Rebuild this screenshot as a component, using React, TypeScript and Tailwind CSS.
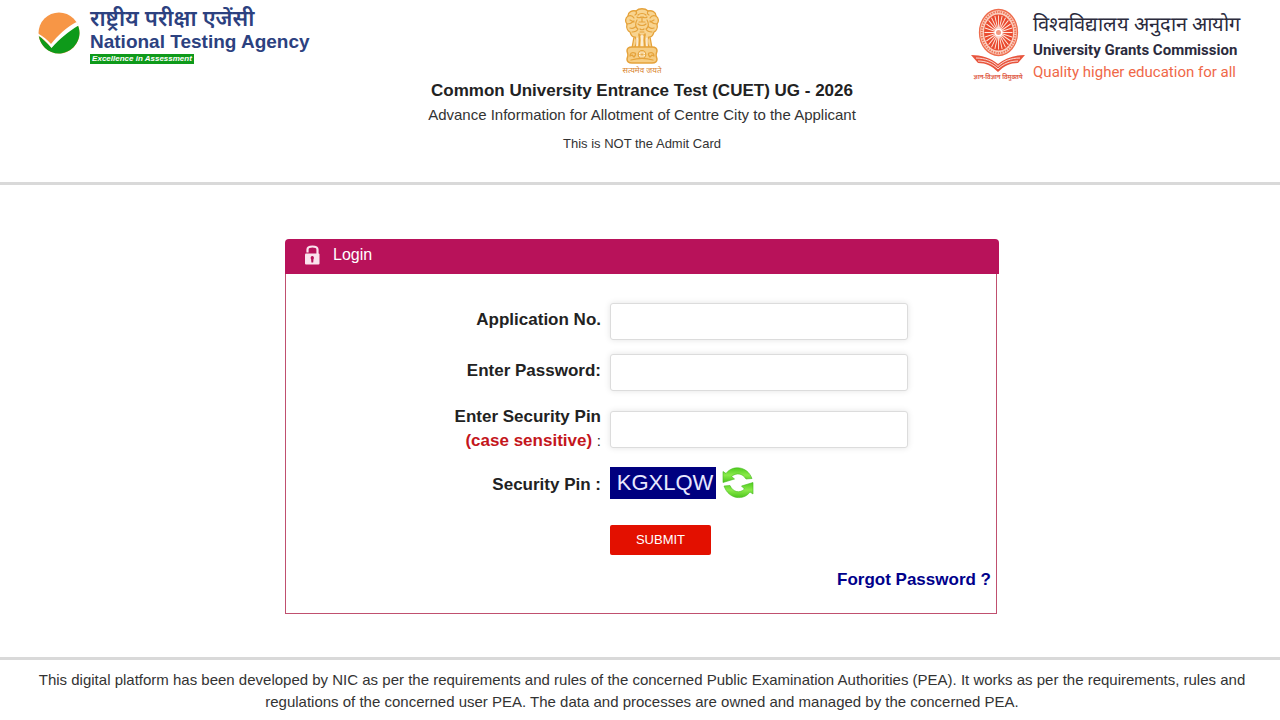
import { useState } from "react";

const SPOKES = Array.from({ length: 24 }, (_, i) => i * 15);

function NtaMark() {
    return (
        <svg viewBox="0 0 42 42" className="w-[42px] h-[42px]" aria-hidden="true">
            <circle cx="21" cy="21" r="20.5" fill="#f79646" />
            <path d="M.8 23.5C2 33.500 10.500 41.500 21 41.500S41.500 32 41.500 21c0-3-.8-6-2-8.500C30 19 22 26 13.500 35.500Z" fill="#0e9a1a" />
            <path d="M0 21.500c5 2.500 9.500 6.500 13 10.500C20 23 29 15 38.500 10l2 3.500C30.500 19.500 22 26.500 13.500 36 9 30.500 5 26 0 23.500Z" fill="#fff" />
        </svg>
    )
}

function Emblem() {
    return (
        <svg viewBox="0 0 36 56" className="w-9 h-14" fill="none" stroke="#e5a23a" strokeLinecap="round" strokeLinejoin="round" aria-hidden="true">
            <path d="M12 3c3-3 9-3 12 0 4-1 8 1 8 5 3 2 3 6 1 8 1 4-1 7-3 8-1 3-3 5-4 5l2 11H8l2-11c-1 0-3-2-4-5-2-1-4-4-3-8-2-2-2-6 1-8 0-4 4-6 8-5Z" fill="#f8d490" strokeWidth="1.300" />
            <path d="M12 3c1 2 1 3-1 4m13-4c-1 2-1 3 1 4M4 8c3-1 5 0 6 2m22-2c-3-1-5 0-6 2M14 7c2-2 6-2 8 0M13 9c1 1 3 1 4 0m2 0c1 1 3 1 4 0M18 9v5m-3 0h6m-7 2c2 2 6 2 8 0m-9-4c-2 3-2 7 1 9m9-9c2 3 2 7-1 9M3 16c3 0 5-1 7-3m23 3c-3 0-5-1-7-3M6 12l4 2m20-2-4 2M6 20c2 1 5 0 6-2m18 2c-2 1-5 0-6-2M8 24c3 0 5-1 6-3m14 3c-3 0-5-1-6-3m-6 0c1 1 3 1 4 0m-4 3h4m-5 3h6" strokeWidth="1.200" />
            <path d="M11 29c2 2 2 6 0 10m4-13c1 4 1 8 0 13m6-13c-1 4-1 8 0 13m4-10c-2 2-2 6 0 10" strokeWidth="1.500" />
            <path d="M13 30v8m5-11v12m5-9v8" stroke="#fff" strokeWidth="1.200" />
            <path d="M3 43c0-3 2-4 5-4h20c3 0 5 1 5 4-1 2-1 6 0 8 0 3-2 4-5 4H8c-3 0-5-1-5-4 1-2 1-6 0-8Z" fill="#f6cd83" strokeWidth="1.500" />
            <circle cx="18" cy="46.500" r="3.800" fill="#fff2d5" strokeWidth="1.200" />
            <path d="M18 43v7m-3.500-3.500h7M15.500 44l5 5m0-5-5 5" strokeWidth=".6" />
            <path d="M6 48c0-3 2-4 5-3 1 1 0 3-1 4m-4-1 2-1 2 2m20-1c0-3-2-4-5-3-1 1 0 3 1 4m4-1-2-1-2 2M7 52c7-2 15-2 22 0" strokeWidth="1.300" />
        </svg>
    )
}

function UgcMark() {
    return (
        <svg viewBox="0 0 54 64" className="w-[54px] h-16" fill="none" aria-hidden="true">
            <ellipse cx="27.500" cy="24.500" rx="19" ry="23" fill="#fbd0c0" stroke="#ee6c4d" strokeWidth="1.300" />
            <ellipse cx="27.500" cy="24.500" rx="16.800" ry="20.600" stroke="#ee7558" strokeWidth="2" strokeDasharray="1.500 1" />
            <ellipse cx="27.500" cy="24.500" rx="14.500" ry="18" fill="#e9492d" />
            <g stroke="#ffe9df" strokeWidth=".9" transform="translate(27.500 24.500) scale(1 1.220)">
                {SPOKES.map((angle) => (
                    <path key={angle} d="M0 3v11" transform={`rotate(${angle})`} />
                ))}
            </g>
            <circle cx="27.500" cy="24.500" r="4" fill="#fff" />
            <circle cx="27.500" cy="24.500" r="2.500" fill="#f29a82" />
            <path d="M0 47c10 0 20 3 27 9 7-6 17-9 27-9l-7 8c-8 0-14 3-20 9-6-6-12-9-20-9Z" fill="#e8543c" />
            <path d="M5 50c9 0 17 3 22 8.500C32 53 40 50 49 50M7 53c8 0 15 3 20 8 5-5 12-8 20-8" stroke="#fff" strokeWidth=".8" />
        </svg>
    )
}

function LockIcon() {
    return (
        <svg viewBox="0 0 16 20" className="w-4 h-5" aria-hidden="true">
            <path d="M2.500 7.500V4.500C2.500 2.500 4 1.500 7.500 1.500s5 1 5 3V10" fill="none" stroke="#fbe3ee" strokeWidth="2.200" />
            <rect x="0" y="8.500" width="14.500" height="11" rx="1" fill="#fbe3ee" />
            <path d="M7.300 11a1.800 1.800 0 0 1 1.200 3l-.3 3.500H6.400L6.100 14a1.800 1.800 0 0 1 1.200-3Z" fill="#b8125a" />
        </svg>
    )
}

function RefreshIcon() {
    return (
        <svg viewBox="0 0 32 32" className="w-8 h-8" aria-hidden="true">
            <defs>
                <linearGradient id="leaf" x1="0" y1="0" x2="0" y2="1">
                    <stop offset="0" stopColor="#4fcb1f" />
                    <stop offset=".5" stopColor="#8aea4a" />
                    <stop offset="1" stopColor="#4cc51c" />
                </linearGradient>
            </defs>
            <g fill="url(#leaf)" stroke="#45bb1c" strokeWidth=".6" strokeLinejoin="round">
                <path d="M1 4.500 4 6.500C10-2 25-1.500 30 11.500l-6 .5C20.500 6 14 5.500 9.500 9.500L12.500 12 1 15.500Z" />
                <path d="M31 27 28 25C22 33.500 7 33 2 19l6-.5c3 7 10 8 14.500 3.500L19.500 19 31 15.500Z" />
            </g>
        </svg>
    )
}

function Header() {
    return (
        <header className="grid grid-cols-[1fr_auto_1fr] pl-9 pr-8 pt-2 pb-6 border-b-3 border-[#d9d9d9]">
            <div className="flex items-start gap-[10px] pl-[2px]">
                <div className="pt-1"><NtaMark /></div>
                <div className="text-[#2c4180] font-bold">
                    <p lang="hi" className="text-[22px] leading-[22px] font-semibold whitespace-nowrap">राष्ट्रीय परीक्षा एजेंसी</p>
                    <p className="text-[19px] leading-6 whitespace-nowrap">National Testing Agency</p>
                    <p className="w-[104px] text-center bg-[#0e9a1a] text-white italic text-[8px] leading-[10px] whitespace-nowrap">Excellence in Assessment</p>
                </div>
            </div>

            <div className="flex flex-col items-center text-center text-[#333]">
                <Emblem />
                <p lang="hi" className="text-[8px] leading-[14px] text-[#d9852f]">सत्यमेव जयते</p>
                <h1 className="text-[17px] leading-[26px] font-bold text-[#222]">Common University Entrance Test (CUET) UG - 2026</h1>
                <h2 className="text-[15px] leading-[22px]">Advance Information for Allotment of Centre City to the Applicant</h2>
                <p className="pt-1 text-[13px] leading-7">This is NOT the Admit Card</p>
            </div>

            <div className="flex items-start justify-end gap-2 pr-2">
                <div className="flex flex-col items-center">
                    <UgcMark />
                    <p lang="hi" className="text-[6px] leading-[10px] font-bold text-[#e0604a] whitespace-nowrap">ज्ञान-विज्ञान विमुक्तये</p>
                </div>
                <div className="font-[Roboto] text-[#2b2b3d] whitespace-nowrap">
                    <p lang="hi" className="text-[20px] leading-8 font-medium">विश्वविद्यालय अनुदान आयोग</p>
                    <p className="text-[15px] leading-[20px] font-bold">University Grants Commission</p>
                    <p className="text-[15px] leading-6 text-[#ef6848]">Quality higher education for all</p>
                </div>
            </div>
        </header>
    )
}

const inputStyle = "w-full max-w-[298px] h-[37px] px-3 bg-white border border-[#dcdcdc] rounded-[3px] shadow-[0_0_6px_#e4e4e4] outline-none focus:border-[#b8125a]";

function LoginForm() {

    const [applicationNo, setApplicationNo] = useState('');
    const [password, setPassword] = useState('');
    const [pin, setPin] = useState('');

    return (
        <section className="w-full max-w-[714px]">
            <div className="flex items-center gap-3 h-[35px] px-5 pb-[3px] rounded-t-[4px] bg-[#b8125a] text-white">
                <LockIcon />
                <h2 className="text-[16px]">Login</h2>
            </div>
            <form
                onSubmit={(e) => e.preventDefault()}
                className="mr-[2px] pt-[29px] pb-5 border border-t-0 border-[#c0506f] text-[17px] font-bold text-[#222]">
                <div className="grid grid-cols-[315px_1fr] gap-x-[9px] gap-y-[14px] items-center">
                    <label htmlFor="application" className="text-right pb-1">Application No.</label>
                    <input id="application" type="text" className={inputStyle} value={applicationNo} onChange={(e) => setApplicationNo(e.target.value)} />

                    <label htmlFor="password" className="text-right pb-1">Enter Password:</label>
                    <input id="password" type="password" className={inputStyle} value={password} onChange={(e) => setPassword(e.target.value)} />

                    <label htmlFor="pin" className="text-right leading-6">
                        Enter Security Pin<br />
                        <span className="text-[#c4161c]">(case sensitive)</span> <span className="text-[15px] font-normal">:</span>
                    </label>
                    <input id="pin" type="text" className={inputStyle} value={pin} onChange={(e) => setPin(e.target.value)} />

                    <p className="text-right pt-1">Security Pin :</p>
                    <div className="flex items-center gap-[6px]">
                        <span className="w-[106px] h-8 pl-1 text-center bg-[#00007f] text-[#e8e8ff] text-[22px] leading-8 font-normal">KGXLQW</span>
                        <button type="button" aria-label="Refresh security pin"><RefreshIcon /></button>
                    </div>

                    <button type="submit" className="col-start-2 w-[101px] h-[30px] mt-3 rounded-[2px] bg-[#e31000] text-white text-[13px] font-normal">SUBMIT</button>
                </div>
                <div className="mt-3 pr-[5px] text-right">
                    <a href="#forgot" className="text-[#00008b]">Forgot Password ?</a>
                </div>
            </form>
        </section>
    )
}

export default function App() {
    return (
        <div className="min-h-screen flex flex-col bg-white font-['Liberation_Sans','Noto_Sans',sans-serif]">
            <Header />
            <main className="flex-1 flex items-start justify-center pl-1 pt-[54px] pb-[43px]">
                <LoginForm />
            </main>
            <footer className="pl-9 pr-8 pt-[9px] pb-[10px] border-t-3 border-[#d9d9d9] text-center text-[15px] leading-[22px] text-[#333]">
                This digital platform has been developed by NIC as per the requirements and rules of the concerned Public Examination Authorities (PEA). It works as per the requirements, rules and regulations of the concerned user PEA. The data and processes are owned and managed by the concerned PEA.
            </footer>
        </div>
    )
}
